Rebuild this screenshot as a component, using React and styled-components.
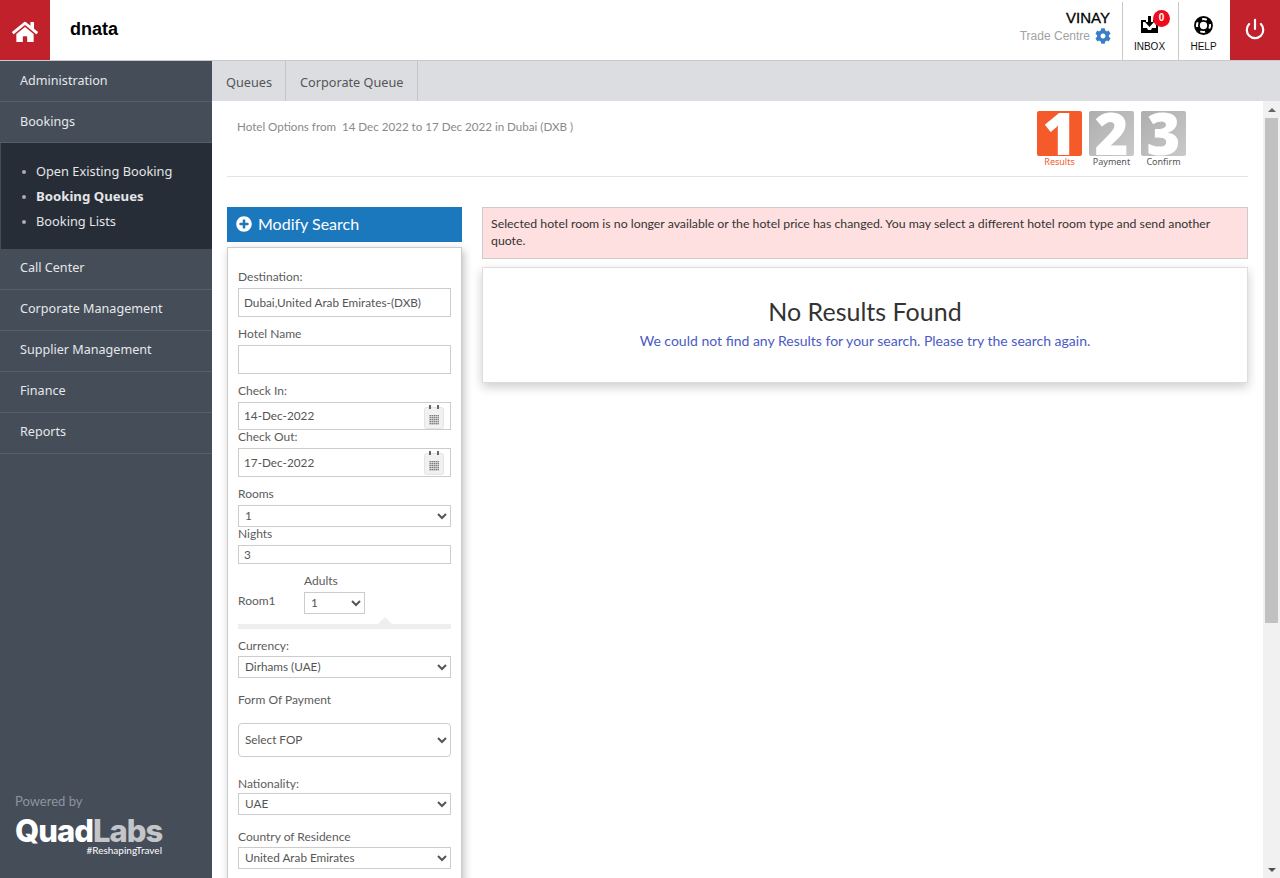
import React from 'react';
import styled, { createGlobalStyle } from 'styled-components';
import { FaHome, FaCog, FaPlusCircle } from 'react-icons/fa';
import { Power } from 'lucide-react';

const GlobalStyle = createGlobalStyle`
  * { box-sizing: border-box; }
  html, body { margin: 0; height: 100%; overflow: hidden; }
  body { font-family: "Lato", "Liberation Sans", sans-serif; color: #333; background: #fff; }
`;

const Page = styled.div`
  height: 100vh;
  display: flex;
  flex-direction: column;
`;
const Header = styled.header`
  height: 61px;
  flex: none;
  display: flex;
  align-items: stretch;
  background: #fff;
  border-bottom: 1px solid #c9c9c9;
`;
const RedBlock = styled.div`
  width: 50px;
  padding: ${(p) => p.$pad || 0};
  background: #c1212a;
  color: #fff;
  display: flex;
  align-items: center;
  justify-content: center;
`;
const Brand = styled.div`
  flex: 1;
  padding-left: 20px;
  font: bold 18px "Liberation Sans", sans-serif;
  line-height: 59px;
  color: #000;
`;
const UserBox = styled.div`
  padding: 9px 12px 0 0;
  text-align: right;
  font-family: "Liberation Sans", sans-serif;
`;
const UserName = styled.div`
  font-size: 15px;
  line-height: 18px;
  color: #000;
  -webkit-text-stroke: 0.3px #000;
`;
const UserPlace = styled.div`
  margin-top: 1px;
  display: flex;
  align-items: center;
  gap: 5px;
  font-size: 12px;
  line-height: 16px;
  color: #a3a3a3;
  svg { color: #3a7fc6; margin-right: -1px; }
`;
const HeadCell = styled.div`
  width: ${(p) => p.$w}px;
  margin-top: 2px;
  padding: 14px 2px 0 0;
  border-left: 1px solid #c9c9c9;
  display: flex;
  flex-direction: column;
  align-items: center;
  position: relative;
  font: 10px "Liberation Sans", sans-serif;
  color: #111;
  span { margin-top: 7px; line-height: 12px; }
`;
const IconSlot = styled.div`
  height: 18px;
`;
const Badge = styled.b`
  position: absolute;
  top: 8px;
  left: 30px;
  width: 17px;
  height: 17px;
  border-radius: 50%;
  background: #ee0c1c;
  color: #fff;
  font: bold 10px/16px "Liberation Sans", sans-serif;
  text-align: center;
`;
const Body = styled.div`
  flex: 1;
  min-height: 0;
  display: flex;
`;
const Sidebar = styled.nav`
  width: 212px;
  flex: none;
  background: #454d59;
  display: flex;
  flex-direction: column;
  font-family: "Noto Sans", sans-serif;
`;
const NavItem = styled.div`
  height: 41px;
  padding-left: 20px;
  line-height: ${(p) => p.$lh || 39}px;
  font-size: 12.6px;
  color: #e6e8ea;
  border-bottom: 1px solid #575e69;
`;
const SubNav = styled.ul`
  margin: 0;
  height: 106px;
  padding: 16px 0 0 35px;
  background: #272d36;
  border-left: 1px solid #454d59;
  list-style: none;
`;
const SubItem = styled.li`
  position: relative;
  height: 25px;
  line-height: 25px;
  font-size: ${(p) => (p.$active ? 13.2 : 12.8)}px;
  font-weight: ${(p) => (p.$active ? 700 : 400)};
  color: #e3e5e8;
  &::before {
    content: '';
    position: absolute;
    left: -14px;
    top: 11px;
    width: 4px;
    height: 4px;
    border-radius: 50%;
    background: #a9adb3;
  }
`;
const Powered = styled.div`
  margin-top: auto;
  padding: 0 0 22px 15px;
`;
const PoweredText = styled.div`
  font: 13px/16px "Lato", sans-serif;
  color: #8e949c;
`;
const Logo = styled.div`
  width: 147px;
  margin-top: 7px;
  font: 800 31px/30px "Inter", sans-serif;
  letter-spacing: -1px;
  color: #fff;
  white-space: nowrap;
  em { font-style: normal; color: #c3c5c8; }
`;
const Tagline = styled.div`
  width: 147px;
  margin-top: -1px;
  text-align: right;
  font: 10px/11px "Lato", sans-serif;
  color: #fff;
`;
const Content = styled.div`
  flex: 1;
  min-width: 0;
  display: flex;
  flex-direction: column;
`;
const Tabs = styled.div`
  height: 40px;
  flex: none;
  display: flex;
  background: #dcdde1;
`;
const Tab = styled.div`
  padding: 0 14px;
  border-right: 1px solid #c4c5c9;
  font: 12.7px/42px "Noto Sans", sans-serif;
  color: #555;
  &:first-child { padding-right: 13px; }
`;
const Viewport = styled.div`
  flex: 1;
  min-height: 0;
  display: flex;
`;
const Main = styled.main`
  flex: 1;
  min-width: 0;
  overflow: hidden;
  padding: 0 15px;
`;
const ScrollRail = styled.div`
  width: 17px;
  flex: none;
  display: flex;
  flex-direction: column;
  background: #f1f1f1;
`;
const RailButton = styled.div`
  height: 17px;
  flex: none;
  margin-top: ${(p) => (p.$down ? 'auto' : 0)};
  display: flex;
  align-items: center;
  justify-content: center;
  &::before {
    content: '';
    border-left: 4px solid transparent;
    border-right: 4px solid transparent;
    border-bottom: ${(p) => (p.$down ? 0 : '4px solid #666')};
    border-top: ${(p) => (p.$down ? '4px solid #505050' : 0)};
  }
`;
const RailThumb = styled.div`
  height: 505px;
  margin: 0 2px;
  background: #c1c1c1;
`;
const TopRow = styled.div`
  height: 76px;
  display: flex;
  justify-content: space-between;
  border-bottom: 1px solid #e3e3e3;
  padding: 10px 62px 0 10px;
`;
const TripText = styled.div`
  font-size: 11.6px;
  line-height: 14px;
  padding-top: 9px;
  color: #8a8a8a;
`;
const Steps = styled.div`
  display: flex;
  gap: 7px;
`;
const Step = styled.div`
  width: 45px;
  text-align: center;
  font: 9px/11px "Noto Sans", sans-serif;
  color: ${(p) => (p.$on ? '#f45a2a' : '#555')};
`;
const StepBox = styled.div`
  height: 45px;
  border-radius: 2px;
  background: ${(p) => (p.$on ? '#f45a2a' : 'linear-gradient(135deg, #aeaeae, #c9c9c9)')};
  color: #fff;
  font: 800 58px/43px "Open Sans", sans-serif;
`;
const Columns = styled.div`
  margin-top: 30px;
  display: flex;
  align-items: flex-start;
  gap: 20px;
`;
const FormColumn = styled.div`
  width: 235px;
  flex: none;
`;
const ModifyBar = styled.div`
  height: 35px;
  padding: 0 0 2px 9px;
  background: #1b78bd;
  color: #fff;
  display: flex;
  align-items: center;
  gap: 6px;
  font-size: 16px;
`;
const FormPanel = styled.div`
  margin-top: 5px;
  padding: 20px 10px 40px;
  background: #fff;
  border: 1px solid #ccc;
  box-shadow: 2px 3px 8px rgba(0, 0, 0, 0.25);
`;
const Label = styled.label`
  display: block;
  height: 18px;
  margin-top: ${(p) => p.$top || 0}px;
  font-size: 12px;
  line-height: 18px;
  color: #5c5c5c;
`;
const TextInput = styled.input`
  display: block;
  width: 100%;
  height: ${(p) => p.$h || 29}px;
  margin-top: 2px;
  padding: 0 5px 1px;
  border: 1px solid #ccc;
  border-radius: 0;
  outline: 0;
  background: #fff;
  font-family: "Lato", sans-serif;
  font-size: 11.75px;
  color: #555;
`;
const DateBox = styled.div`
  position: relative;
`;
const CalendarBtn = styled.div`
  position: absolute;
  right: 7px;
  top: 2px;
  width: 20px;
  height: 25px;
  pointer-events: none;
`;
const Select = styled.select`
  display: block;
  width: ${(p) => (p.$w ? `${p.$w}px` : '100%')};
  height: ${(p) => p.$h || 22}px;
  margin-top: ${(p) => (p.$gap === undefined ? 2 : p.$gap)}px;
  padding: 0 2px 1px;
  border: 1px solid #ccc;
  border-radius: ${(p) => p.$radius || 0}px;
  outline: 0;
  background: #fff;
  font-family: "Lato", sans-serif;
  font-size: 11.75px;
  color: #555;
`;
const RoomRow = styled.div`
  margin-top: 8px;
  display: flex;
  align-items: flex-end;
`;
const RoomName = styled.div`
  width: 66px;
  height: 22px;
  font-size: 12px;
  line-height: 18px;
  color: #5c5c5c;
`;
const RoomDivider = styled.div`
  position: relative;
  height: 5px;
  margin-top: 10px;
  background: #eee;
  &::before {
    content: '';
    position: absolute;
    left: 140px;
    top: -7px;
    border-left: 7px solid transparent;
    border-right: 7px solid transparent;
    border-bottom: 7px solid #eee;
  }
`;
const ResultColumn = styled.div`
  flex: 1;
  min-width: 0;
`;
const Alert = styled.div`
  height: 52px;
  padding: 7px 10px 0 8px;
  background: #ffe0e0;
  border: 1px solid #ccc;
  font-size: 12.3px;
  line-height: 17px;
  color: #333;
`;
const EmptyCard = styled.div`
  height: 116px;
  margin-top: 8px;
  padding-top: 27px;
  background: #fff;
  border: 1px solid #ddd;
  box-shadow: 0 4px 10px rgba(0, 0, 0, 0.2);
  text-align: center;
`;
const EmptyTitle = styled.h2`
  margin: 0;
  font-size: 25px;
  font-weight: 400;
  line-height: 32px;
  color: #333;
`;
const EmptyText = styled.div`
  margin-top: 5px;
  font-size: 14px;
  line-height: 18px;
  color: #4a5bc4;
`;

const gridCols = [0, 2, 4, 6, 8];
const gridRows = [0, 2, 4, 6, 8];

const CalendarIcon = () => (
  <svg width="20" height="25" viewBox="0 0 20 25">
    <rect x="0.5" y="3.5" width="19" height="21" rx="2" fill="#f1f1f1" stroke="#e4e4e4" />
    <rect x="5" y="1" width="2" height="4" fill="#666" />
    <rect x="13" y="1" width="2" height="4" fill="#666" />
    {gridRows.map((r) =>
      gridCols.map((c) => <rect key={`${r}-${c}`} x={5.5 + c} y={11 + r} width="1.4" height="1.4" fill="#777" />)
    )}
  </svg>
);

const InboxIcon = () => (
  <svg width="17" height="17" viewBox="0 0 17 17">
    <path d="M0 4h5v2H2v6h4l1 2h3l1-2h4V6h-3V4h5v13H0z" fill="#000" />
    <path d="M7 0h3v6h3l-4.5 5L4 6h3z" fill="#000" />
  </svg>
);

const HelpIcon = () => (
  <svg width="19" height="19" viewBox="0 0 19 19">
    <circle cx="9.5" cy="9.5" r="8.5" fill="none" stroke="#000" strokeWidth="1.8" />
    <circle cx="9.5" cy="9.5" r="4.6" fill="none" stroke="#000" strokeWidth="1.8" />
    <circle
      cx="9.5"
      cy="9.5"
      r="6.6"
      fill="none"
      stroke="#000"
      strokeWidth="3"
      strokeDasharray="5.5 4.87"
      transform="rotate(28 9.5 9.5)"
    />
  </svg>
);

const menuBefore = ['Administration', 'Bookings'];
const menuAfter = ['Call Center', 'Corporate Management', 'Supplier Management', 'Finance', 'Reports'];

const DateField = ({ value, h }) => (
  <DateBox>
    <TextInput $h={h} defaultValue={value} readOnly />
    <CalendarBtn>
      <CalendarIcon />
    </CalendarBtn>
  </DateBox>
);

const App = () => {
  return (
    <Page>
      <GlobalStyle />
      <Header>
        <RedBlock $pad="3px 0 0">
          <FaHome size={26} />
        </RedBlock>
        <Brand>dnata</Brand>
        <UserBox>
          <UserName>VINAY</UserName>
          <UserPlace>
            Trade Centre <FaCog size={16} />
          </UserPlace>
        </UserBox>
        <HeadCell $w={56}>
          <IconSlot>
            <InboxIcon />
          </IconSlot>
          <Badge>0</Badge>
          <span>INBOX</span>
        </HeadCell>
        <HeadCell $w={52}>
          <IconSlot>
            <HelpIcon />
          </IconSlot>
          <span>HELP</span>
        </HeadCell>
        <RedBlock $pad="0 1px 2px 0">
          <Power size={22} strokeWidth={2.4} />
        </RedBlock>
      </Header>
      <Body>
        <Sidebar>
          {menuBefore.map((m) => (
            <NavItem key={m}>{m}</NavItem>
          ))}
          <SubNav>
            <SubItem>Open Existing Booking</SubItem>
            <SubItem $active>Booking Queues</SubItem>
            <SubItem>Booking Lists</SubItem>
          </SubNav>
          {menuAfter.map((m) => (
            <NavItem key={m} $lh={37}>
              {m}
            </NavItem>
          ))}
          <Powered>
            <PoweredText>Powered by</PoweredText>
            <Logo>
              Quad<em>Labs</em>
            </Logo>
            <Tagline>#ReshapingTravel</Tagline>
          </Powered>
        </Sidebar>
        <Content>
          <Tabs>
            <Tab>Queues</Tab>
            <Tab>Corporate Queue</Tab>
          </Tabs>
          <Viewport>
            <Main>
              <TopRow>
                <TripText>Hotel Options from &nbsp;14 Dec 2022 to 17 Dec 2022 in Dubai (DXB )</TripText>
                <Steps>
                  <Step $on>
                    <StepBox $on>1</StepBox>
                    Results
                  </Step>
                  <Step>
                    <StepBox>2</StepBox>
                    Payment
                  </Step>
                  <Step>
                    <StepBox>3</StepBox>
                    Confirm
                  </Step>
                </Steps>
              </TopRow>
              <Columns>
                <FormColumn>
                  <ModifyBar>
                    <FaPlusCircle size={16} />
                    Modify Search
                  </ModifyBar>
                  <FormPanel>
                    <Label>Destination:</Label>
                    <TextInput defaultValue="Dubai,United Arab Emirates-(DXB)" readOnly />
                    <Label $top={8}>Hotel Name</Label>
                    <TextInput readOnly />
                    <Label $top={8}>Check In:</Label>
                    <DateField value="14-Dec-2022" h={28} />
                    <Label $top={-2}>Check Out:</Label>
                    <DateField value="17-Dec-2022" h={29} />
                    <Label $top={8}>Rooms</Label>
                    <Select defaultValue="1">
                      <option>1</option>
                    </Select>
                    <Label $top={-2}>Nights</Label>
                    <TextInput $h={19} defaultValue="3" readOnly />
                    <RoomRow>
                      <RoomName>Room1</RoomName>
                      <div>
                        <Label>Adults</Label>
                        <Select $w={61} defaultValue="1">
                          <option>1</option>
                        </Select>
                      </div>
                    </RoomRow>
                    <RoomDivider />
                    <Label $top={8}>Currency:</Label>
                    <Select $gap={1} defaultValue="Dirhams (UAE)">
                      <option>Dirhams (UAE)</option>
                    </Select>
                    <Label $top={13}>Form Of Payment</Label>
                    <Select $gap={14} $h={34} $radius={4} defaultValue="Select FOP">
                      <option>Select FOP</option>
                    </Select>
                    <Label $top={18}>Nationality:</Label>
                    <Select $gap={0} defaultValue="UAE">
                      <option>UAE</option>
                    </Select>
                    <Label $top={13}>Country of Residence</Label>
                    <Select $gap={1} defaultValue="United Arab Emirates">
                      <option>United Arab Emirates</option>
                    </Select>
                  </FormPanel>
                </FormColumn>
                <ResultColumn>
                  <Alert>
                    Selected hotel room is no longer available or the hotel price has changed. You may select a
                    different hotel room type and send another quote.
                  </Alert>
                  <EmptyCard>
                    <EmptyTitle>No Results Found</EmptyTitle>
                    <EmptyText>We could not find any Results for your search. Please try the search again.</EmptyText>
                  </EmptyCard>
                </ResultColumn>
              </Columns>
            </Main>
            <ScrollRail>
              <RailButton />
              <RailThumb />
              <RailButton $down />
            </ScrollRail>
          </Viewport>
        </Content>
      </Body>
    </Page>
  );
};

export default App;
